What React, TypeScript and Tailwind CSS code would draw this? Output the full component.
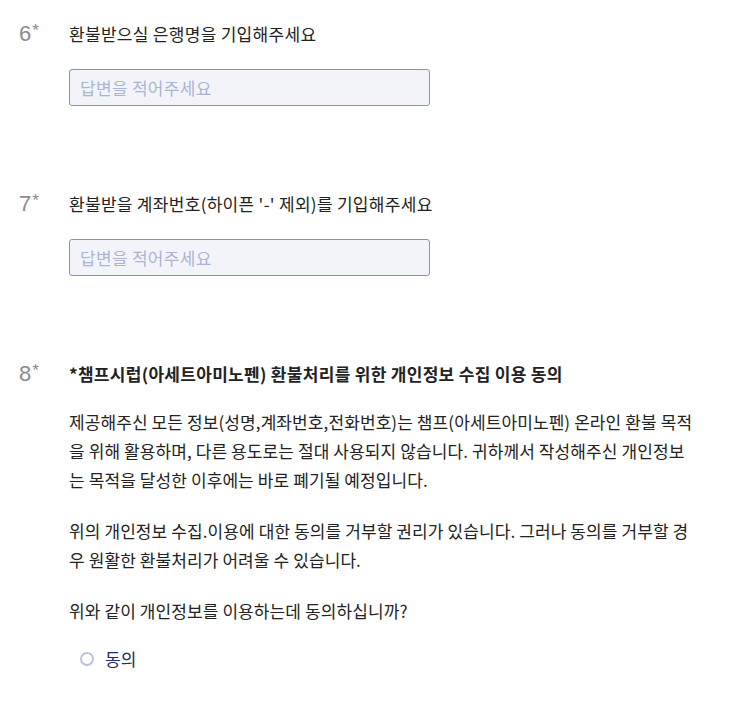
import React from 'react';

const FONT = "font-['Noto_Sans_CJK_KR','Noto_Sans',sans-serif]";

interface QuestionProps {
  num: number;
  title: React.ReactNode;
  bold?: boolean;
  children: React.ReactNode;
}

const Question: React.FC<QuestionProps> = ({ num, title, bold, children }) => (
  <div className="flex">
    <div className="w-[50px] shrink-0 font-['Liberation_Sans',Arial,sans-serif] text-[22px] leading-6 text-[#8b8b8b]">
      {num}
      <span className="relative -top-[5px] ml-[1px] text-[17px]">*</span>
    </div>
    <div className="flex-1">
      <div className={`text-[17px] leading-6 tracking-[0.3px] text-[#222] ${bold ? 'font-bold' : ''}`}>{title}</div>
      {children}
    </div>
  </div>
);

const AnswerInput: React.FC = () => (
  <input
    type="text"
    placeholder="답변을 적어주세요"
    className={`mt-[23px] block h-[37px] w-[361px] rounded-[3px] border border-[#7f93c7] bg-[#f2f4fa] px-[10px] text-[17px] tracking-[0.3px] text-[#222] outline-none placeholder:text-[#abb4d4] ${FONT}`}
  />
);

const App: React.FC = () => {
  return (
    <div className={`min-h-screen bg-white pl-[19px] pr-[42px] pt-[22px] ${FONT}`}>
      <Question num={6} title="환불받으실 은행명을 기입해주세요">
        <AnswerInput />
      </Question>

      <div className="h-[86px]" />

      <Question num={7} title="환불받을 계좌번호(하이픈 '-' 제외)를 기입해주세요">
        <AnswerInput />
      </Question>

      <div className="h-[86px]" />

      <Question num={8} bold title="*챔프시럽(아세트아미노펜) 환불처리를 위한 개인정보 수집 이용 동의">
        <div className="mt-[22px] text-[17px] leading-[28.8px] tracking-[0.1px] text-[#222]">
          <p>
            제공해주신 모든 정보(성명,계좌번호,전화번호)는 챔프(아세트아미노펜) 온라인 환불 목적을 위해 활용하며, 다른 용도로는 절대 사용되지 않습니다. 귀하께서 작성해주신 개인정보는 목적을 달성한 이후에는 바로 폐기될 예정입니다.
          </p>
          <p className="mt-[23px]">
            위의 개인정보 수집.이용에 대한 동의를 거부할 권리가 있습니다. 그러나 동의를 거부할 경우 원활한 환불처리가 어려울 수 있습니다.
          </p>
          <p className="mt-[22px]">위와 같이 개인정보를 이용하는데 동의하십니까?</p>
        </div>
        <label className="mt-[21px] ml-[11px] flex items-center gap-[11px] text-[17px] leading-6 text-[#1c2a66]">
          <span className="block h-[14px] w-[14px] rounded-full border-2 border-[#b8c2de] bg-white" />
          동의
        </label>
      </Question>
    </div>
  );
};

export default App;
